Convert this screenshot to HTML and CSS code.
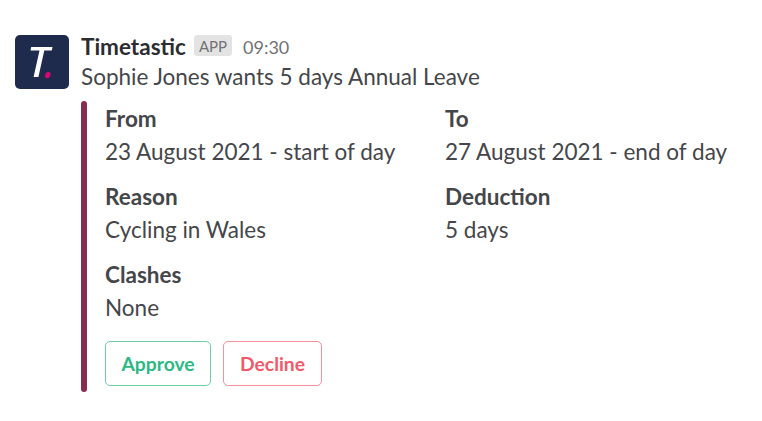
FILE: index.html
```html
<!DOCTYPE html>
<html lang="en">
<head>
    <meta charset="UTF-8">
    <meta name="viewport" content="width=device-width, initial-scale=1.0">
    <title>Timetastic</title>
    <link rel="stylesheet" href="styles.css">
</head>
<body>
    <div class="message">
        <svg class="avatar" viewBox="0 0 54 54" aria-hidden="true">
            <rect width="54" height="54" rx="5" fill="#1e2b4c"/>
            <path d="M16.2 12H37.5L36.8 15.5H29.3L23.4 42H18.6L24.5 15.5H15.5Z" fill="#fff"/>
            <ellipse cx="32.8" cy="40" rx="2.6" ry="3.4" transform="rotate(25 32.8 40)" fill="#d5086f"/>
        </svg>

        <div class="message-content">
            <div class="message-header">
                <span class="sender">Timetastic</span>
                <span class="badge">APP</span>
                <span class="time">09:30</span>
            </div>
            <p class="message-text">Sophie Jones wants 5 days Annual Leave</p>

            <div class="attachment">
                <dl class="fields">
                    <div class="field">
                        <dt>From</dt>
                        <dd>23 August 2021 - start of day</dd>
                    </div>
                    <div class="field">
                        <dt>To</dt>
                        <dd>27 August 2021 - end of day</dd>
                    </div>
                    <div class="field">
                        <dt>Reason</dt>
                        <dd>Cycling in Wales</dd>
                    </div>
                    <div class="field">
                        <dt>Deduction</dt>
                        <dd>5 days</dd>
                    </div>
                    <div class="field">
                        <dt>Clashes</dt>
                        <dd>None</dd>
                    </div>
                </dl>
                <div class="actions">
                    <button class="btn btn-approve">Approve</button>
                    <button class="btn btn-decline">Decline</button>
                </div>
            </div>
        </div>
    </div>
</body>
</html>
```
FILE: styles.css
```css
* {
    margin: 0;
    padding: 0;
    box-sizing: border-box;
    font-family: Lato, sans-serif;
}

body {
    background-color: #fff;
    color: #454649;
    font-size: 22.5px;
}

.message {
    display: flex;
    gap: 12px;
    padding: 35px 0 0 15px;
}

.avatar {
    flex: none;
    width: 54px;
    height: 54px;
}

.message-content {
    flex: 1;
}

.message-header {
    display: flex;
    align-items: center;
    height: 23px;
}

.sender {
    color: #2c2d30;
    font-weight: 700;
}

.badge {
    align-self: flex-start;
    height: 21px;
    margin: 0 11px 0 8px;
    padding: 0 5px;
    background-color: #e3e3e3;
    border-radius: 3px;
    color: #717274;
    font-size: 15px;
    line-height: 22px;
}

.time {
    padding-top: 1px;
    color: #717274;
    font-size: 18px;
}

.message-text {
    margin-top: 3px;
    line-height: 32px;
}

.attachment {
    position: relative;
    margin-top: 8px;
    padding: 1px 0 6px 24px;
    height: 291px;
}

.attachment::before {
    content: "";
    position: absolute;
    top: 0;
    bottom: 0;
    left: 0;
    width: 6px;
    background-color: #872b51;
    border-radius: 3px;
}

.fields {
    display: grid;
    grid-template-columns: 340px 1fr;
    row-gap: 12px;
}

.field {
    line-height: 33px;
    white-space: nowrap;
}

.field dt {
    font-weight: 700;
}

.actions {
    display: flex;
    gap: 12px;
    margin-top: 17px;
}

.btn {
    height: 45px;
    background-color: #fff;
    border-width: 1px;
    border-style: solid;
    border-radius: 5px;
    font-size: 19.3px;
    font-weight: 700;
}

.btn-approve {
    width: 106px;
    border-color: #6fd0a6;
    color: #2eb886;
}

.btn-decline {
    width: 99px;
    border-color: #fa8f9a;
    color: #f0596a;
}
```
